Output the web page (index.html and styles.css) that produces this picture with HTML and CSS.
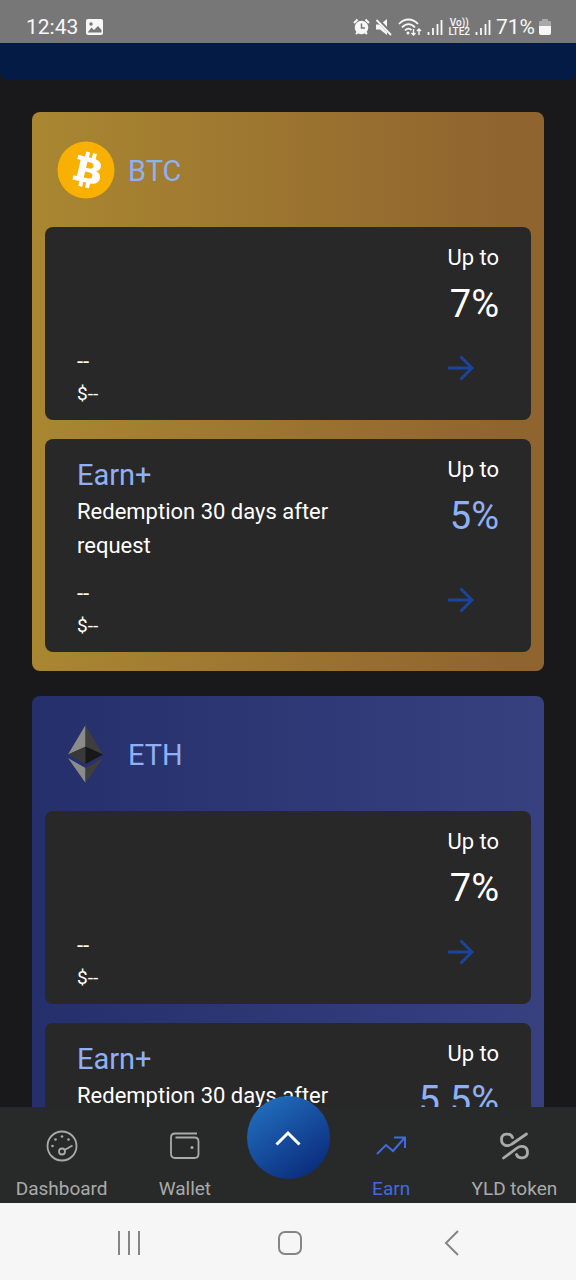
FILE: index.html
```html
<!DOCTYPE html>
<html lang="en">
<head>
<meta charset="utf-8">
<meta name="viewport" content="width=device-width, initial-scale=1">
<title>Earn</title>
<link rel="stylesheet" href="styles.css">
</head>
<body>
<div class="app">
  <header class="status">
    <span class="status-text">12:43</span>
    <svg class="photo-icon" width="17" height="16" viewBox="0 0 17 16"><rect width="17" height="16" rx="2" fill="#f7f7f7"/><circle cx="5" cy="5" r="1.7" fill="#777"/><path d="M2 13 5.5 8.5 8 11 12 7l3.5 4v2.5H2z" fill="#777"/></svg>
    <div class="status-icons">
      <svg width="17" height="18" viewBox="0 0 17 18"><path d="m1 5 3.5-3.500M16 5l-3.500-3.500M3 16l2-2M14 16l-2-2" stroke="#f7f7f7" stroke-width="2"/><circle cx="8.500" cy="9.500" r="6.800" fill="#f7f7f7"/><path d="M8.500 5.500v4.500h3.500" fill="none" stroke="#777" stroke-width="1.500"/></svg>
      <svg width="18" height="18" viewBox="0 0 18 18"><path d="M1 6.500h4L12 1v16l-7-5.500H1z" fill="#f7f7f7"/><path d="m2 1 15 16" stroke="#777" stroke-width="4"/><path d="m1.500 2 14.500 15" stroke="#f7f7f7" stroke-width="1.800"/></svg>
      <svg width="24" height="18" viewBox="0 0 24 18"><g fill="none" stroke="#f7f7f7" stroke-width="1.800"><path d="M1 6C6.500 0 14.500 0 20 6M4 9.500c4-4.500 9-4.500 13 0M7 12.500c2-2.500 4.500-2.500 6.500-.5"/><path d="M15.500 11v6m-2-2 2 2 2-2M21 17v-6m-2 2 2-2 2 2" stroke-width="1.400"/></g><circle cx="10" cy="15" r="1.500" fill="#f7f7f7"/></svg>
      <svg width="16" height="18" viewBox="0 0 16 18"><path d="M1.500 14v3M6 10v7M10.500 6v11M14.500 2v15" stroke="#f7f7f7" stroke-width="1.800"/></svg>
      <span class="lte"><span>Vo))</span><span>LTE2</span></span>
      <svg width="16" height="18" viewBox="0 0 16 18"><path d="M1.500 14v3M6 10v7M10.500 6v11M14.500 2v15" stroke="#f7f7f7" stroke-width="1.800"/></svg>
    </div>
    <span class="status-text">71%</span>
    <svg class="battery" width="12" height="18" viewBox="0 0 12 18"><path d="M3 1h6v2h2q1 0 1 1v4H0V4q0-1 1-1h2z" fill="#a9a9a9"/><path d="M0 8h12v7q0 2-2 2H2q-2 0-2-2z" fill="#f7f7f7"/></svg>
  </header>

  <main class="content">
    <div class="banner"></div>
    <div class="cards">
      <section class="card btc">
        <h2 class="coin">
          <svg width="58" height="58" viewBox="0 0 58 58"><circle cx="29" cy="29" r="28.500" fill="#f8b003"/><g transform="rotate(13 29 29)"><path fill="#fff" fill-rule="evenodd" d="M18 16h7v-5h4v5h3v-5h4v5.300c4.500.8 6.800 3.200 6.800 6.400 0 2.500-1.300 4.400-3.600 5.300 3.200.8 5.300 3.200 5.300 6.100 0 4.300-3 6.700-8.500 7.100v5h-4v-5h-3v5h-4v-5h-7v-4.200h3.500V20.200H18zm10.500 4.600v6.200h3c2.600 0 4-1.100 4-3.100s-1.400-3.100-4-3.100zm0 10v6.200h3.700c2.900 0 4.400-1.100 4.400-3.100s-1.500-3.100-4.400-3.100z"/></g></svg>
          <span>BTC</span>
        </h2>
        <article class="panel">
          <div class="info"><div class="balance"><span class="amount">--</span><span>$--</span></div></div>
          <div class="offer"><span>Up to</span><strong class="rate">7%</strong>
            <button class="go" aria-label="Open BTC earn"><svg width="26" height="26" viewBox="0 0 26 26"><path d="M0 13h24M12.500 1.500 24 13 12.500 24.500"/></svg></button></div>
        </article>
        <article class="panel">
          <div class="info"><h3 class="plan">Earn+</h3><p class="terms">Redemption 30 days after request</p><div class="balance"><span class="amount">--</span><span>$--</span></div></div>
          <div class="offer"><span>Up to</span><strong class="rate plus">5%</strong>
            <button class="go" aria-label="Open BTC Earn+"><svg width="26" height="26" viewBox="0 0 26 26"><path d="M0 13h24M12.500 1.500 24 13 12.500 24.500"/></svg></button></div>
        </article>
      </section>

      <section class="card eth">
        <h2 class="coin">
          <svg width="58" height="58" viewBox="0 0 58 58"><path d="M28.500 0v22L11 29.500z" fill="#8b8b8b"/><path d="M28.500 0v22L46 29.500z" fill="#3e3e3e"/><path d="M28.500 21.500V39L11 29.500z" fill="#393939"/><path d="M28.500 21.500V39L46 29.500z" fill="#181818"/><path d="M11 33l17.500 10v15z" fill="#8b8b8b"/><path d="M46 33 28.500 43v15z" fill="#3e3e3e"/></svg>
          <span>ETH</span>
        </h2>
        <article class="panel">
          <div class="info"><div class="balance"><span class="amount">--</span><span>$--</span></div></div>
          <div class="offer"><span>Up to</span><strong class="rate">7%</strong>
            <button class="go" aria-label="Open ETH earn"><svg width="26" height="26" viewBox="0 0 26 26"><path d="M0 13h24M12.500 1.500 24 13 12.500 24.500"/></svg></button></div>
        </article>
        <article class="panel">
          <div class="info"><h3 class="plan">Earn+</h3><p class="terms">Redemption 30 days after request</p></div>
          <div class="offer"><span>Up to</span><strong class="rate plus">5.5%</strong></div>
        </article>
      </section>
    </div>
  </main>

  <nav class="tabs">
    <a class="tab" href="#dashboard"><svg width="32" height="32" viewBox="0 0 32 32"><g fill="none" stroke="currentColor" stroke-width="1.800"><circle cx="16" cy="16" r="14.500"/><circle cx="16" cy="21.500" r="3"/><path d="m18.500 20 8-4.500"/></g><g fill="currentColor"><circle cx="6.500" cy="16" r="1.300"/><circle cx="9.500" cy="9.500" r="1.300"/><circle cx="16" cy="6.500" r="1.300"/><circle cx="22.500" cy="9.500" r="1.300"/></g></svg><span>Dashboard</span></a>
    <a class="tab" href="#wallet"><svg width="32" height="32" viewBox="0 0 32 32"><g fill="none" stroke="currentColor" stroke-width="1.800"><path d="M28 3.500H6Q2 3.500 2 7.500v16Q2 28 6 28h19.500q4 0 4-4V11.500q0-4-4-4H6.500"/></g><circle cx="23" cy="17.500" r="1.500" fill="currentColor"/></svg><span>Wallet</span></a>
    <button class="fab" aria-label="Open menu"><svg width="28" height="18" viewBox="0 0 28 18"><path d="M2.500 15.500 14 4l11.500 11.500" fill="none" stroke="#fff" stroke-width="3"/></svg></button>
    <a class="tab active" href="#earn" aria-current="page"><svg width="32" height="32" viewBox="0 0 32 32"><path d="m2 24 9-9 7 6L29 8.500M19 7.500h11v10.500" fill="none" stroke="currentColor" stroke-width="2"/></svg><span>Earn</span></a>
    <a class="tab" href="#token"><svg width="32" height="32" viewBox="0 0 32 32"><g fill="none" stroke="currentColor" stroke-width="2.800" stroke-linecap="round"><path d="M14.500 7.500C13 3 3.500 2.500 3.500 9.500c0 6.500 6.500 7.500 10.500 4.500L28.500 4"/><path d="M18.500 24.500c1.500 4.500 11 5 11-2 0-6.500-6.500-7.500-10.500-4.500L5.500 28"/></g></svg><span>YLD token</span></a>
  </nav>

  <div class="system">
    <button aria-label="Recent apps"><svg width="26" height="26" viewBox="0 0 26 26"><path d="M3 1v24M13 1v24M23 1v24"/></svg></button>
    <button aria-label="Home"><svg width="26" height="26" viewBox="0 0 26 26"><rect x="2" y="2" width="22" height="22" rx="6"/></svg></button>
    <button aria-label="Back"><svg width="26" height="26" viewBox="0 0 26 26"><path d="M19 1 7 13l12 12"/></svg></button>
  </div>
</div>
</body>
</html>
```
FILE: styles.css
```css
* { box-sizing: border-box; }
body { margin: 0; font-family: Roboto, sans-serif; color: #fff; background: #19191b; }
h2, h3, p { margin: 0; font-weight: 400; }
button { border: 0; padding: 0; background: none; }
svg { display: block; flex: none; }

.app { display: flex; flex-direction: column; height: 100vh; }

.status { display: flex; align-items: center; flex: none; padding: 11px 25px 0 26px; height: 43px; background: #777; color: #f7f7f7; }
.status-text { font-size: 21px; line-height: 24px; }
.photo-icon { margin-left: 8px; }
.status-icons { display: flex; align-items: center; gap: 5px; margin-left: auto; margin-right: 5px; }
.lte { display: flex; flex-direction: column; align-items: center; font-size: 10px; line-height: 9px; font-weight: 500; }
.battery { margin-left: 4px; }

.content { flex: 1; min-height: 0; overflow: hidden; }
.banner { height: 37px; background: #041c45; border-radius: 0 0 8px 8px; }
.cards { display: flex; flex-direction: column; gap: 25px; padding: 32px; }
.card { display: flex; flex-direction: column; gap: 19px; padding: 0 13px 19px; border-radius: 8px; }
.btc { background: linear-gradient(90deg, #a98731, #90642f 92%); }
.eth { background: linear-gradient(90deg, #242f6b, #374180); }
.coin { display: flex; align-items: center; gap: 13px; height: 115px; margin-bottom: -19px; padding-left: 12px; font-size: 29px; color: #8fb0f5; }
.coin span { padding-top: 2px; }

.panel { display: flex; justify-content: space-between; min-height: 193px; padding: 14px 32px 10px; border-radius: 8px; background: #282828; }
.info { display: flex; flex-direction: column; flex: 1; max-width: 280px; padding-top: 3px; }
.plan { font-size: 29px; line-height: 38px; color: #8fb0f5; }
.terms { padding-top: 1px; margin-bottom: 15px; font-size: 22px; line-height: 34px; }
.balance { display: flex; flex-direction: column; margin-top: auto; font-size: 19px; line-height: 32px; }
.amount { font-size: 22px; }
.offer { display: flex; flex-direction: column; align-items: flex-end; font-size: 22px; line-height: 34px; }
.rate { font-size: 38px; line-height: 58px; font-weight: 400; }
.plus { color: #8fb0f5; }
.go { margin: auto 25px 29px 0; }
.go path { fill: none; stroke: #1b449d; stroke-width: 3; }

.tabs { position: relative; display: flex; flex: none; background: #282a29; }
.tab { display: flex; flex: 1; flex-direction: column; align-items: center; gap: 15px; padding: 23px 0 2px; font-size: 19px; line-height: 24px; white-space: nowrap; text-decoration: none; color: #aaa; }
.active { color: #4169e1; }
.fab { display: flex; align-items: center; justify-content: center; flex: none; width: 83px; height: 83px; margin-top: -11px; border-radius: 50%; background: linear-gradient(145deg, #226dbc 10%, #0a2b7c 90%); }

.system { display: grid; grid-template-columns: repeat(3, 1fr); flex: none; height: 77px; padding: 3px 43px 0 48px; background: #f6f6f6; }
.system button { display: flex; align-items: center; justify-content: center; }
.system svg { fill: none; stroke: #858585; stroke-width: 2; }
```
